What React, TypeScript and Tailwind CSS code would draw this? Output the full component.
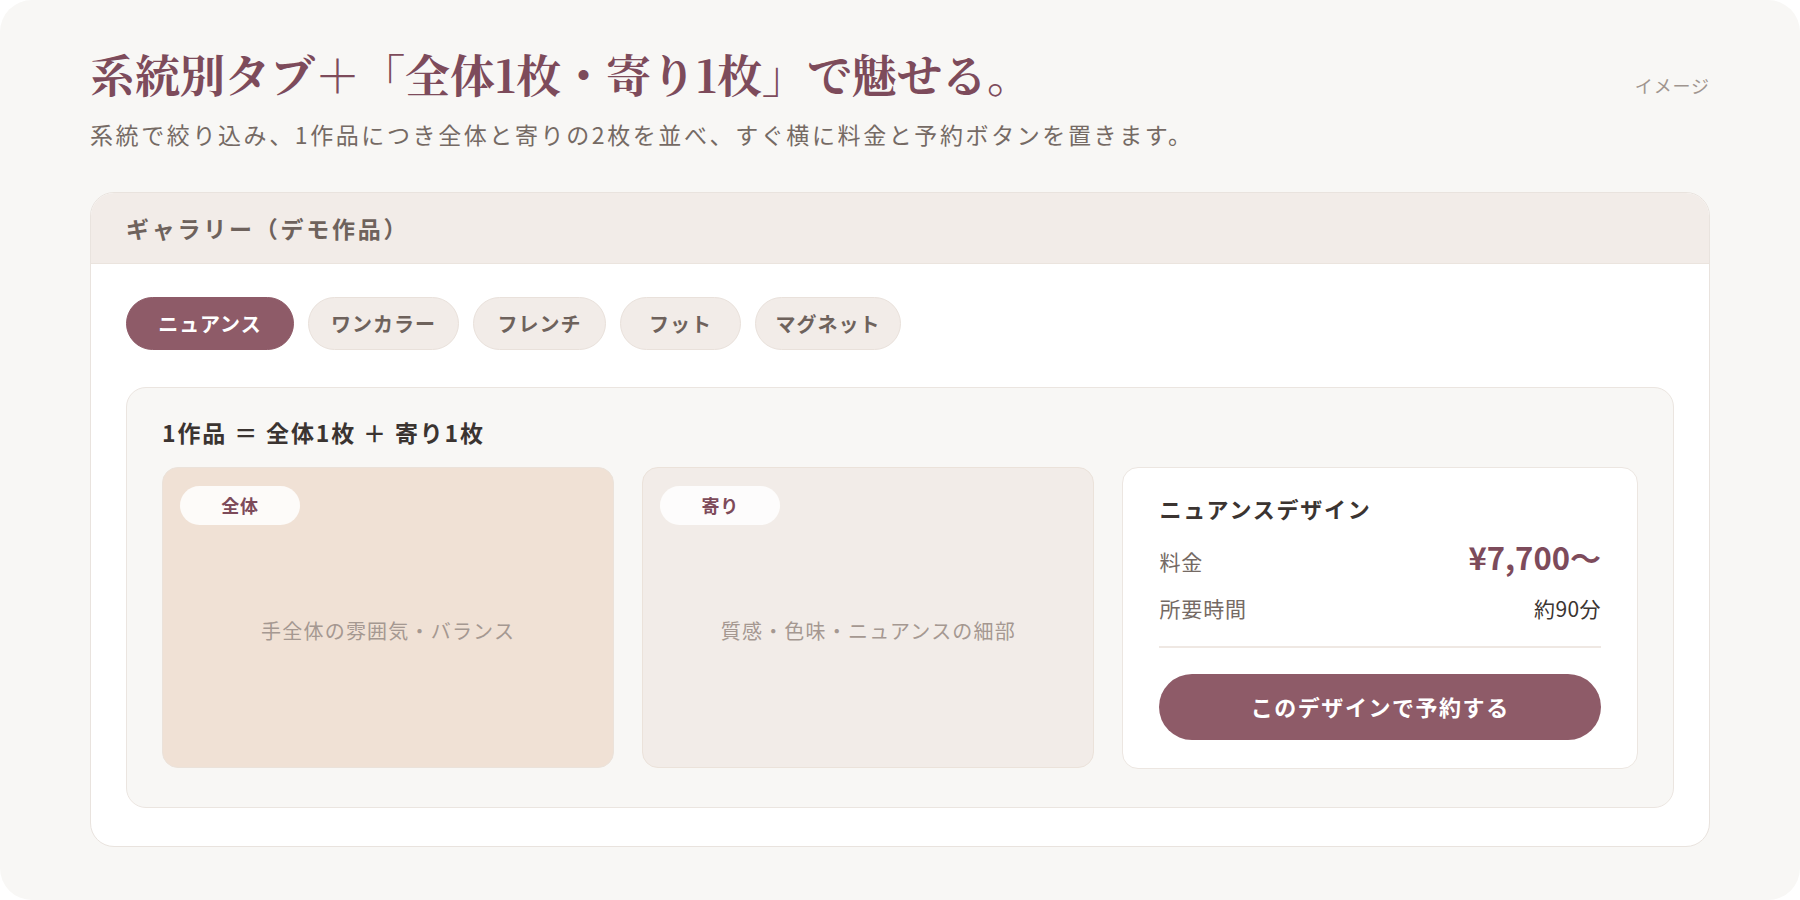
const tabs = [
  { label: "ニュアンス", w: "w-[168px]", active: true },
  { label: "ワンカラー", w: "w-[151px]", active: false },
  { label: "フレンチ", w: "w-[133px]", active: false },
  { label: "フット", w: "w-[121px]", active: false },
  { label: "マグネット", w: "w-[146px]", active: false },
];

function PhotoCard({
  badge,
  caption,
  bg,
}: {
  badge: string;
  caption: string;
  bg: string;
}) {
  return (
    <div
      className={`relative h-[301px] rounded-2xl border border-[#ebe2da] ${bg} flex items-center justify-center pt-[27px]`}
    >
      <span className="absolute left-[17px] top-[18px] w-[120px] h-[39px] rounded-full bg-white/85 flex items-center justify-center text-[18px] font-bold tracking-[0.04em] text-[#7d4b5a]">
        {badge}
      </span>
      <p className="text-[20px] tracking-[0.06em] text-[#a59891]">{caption}</p>
    </div>
  );
}

export default function App() {
  return (
    <div className="h-screen w-full bg-white font-['Noto_Sans_CJK_JP','Noto_Sans',sans-serif]">
      <div className="h-full rounded-[32px] bg-[#f8f7f5] px-[90px] pt-[45px]">
        {/* heading */}
        <div className="flex items-baseline justify-between">
          <h1 className="text-[45px] leading-[58px] font-bold text-[#7d4b5b] font-['Noto_Serif_CJK_JP','Liberation_Serif','Noto_Sans_CJK_JP',serif]">
            系統別タブ＋「全体1枚・寄り1枚」で魅せる。
          </h1>
          <span className="text-[18px] tracking-[0.05em] text-[#a0958f]">イメージ</span>
        </div>
        <p className="mt-[14px] text-[23px] leading-[34px] tracking-[2.6px] text-[#756a64]">
          系統で絞り込み、1作品につき全体と寄りの2枚を並べ、すぐ横に料金と予約ボタンを置きます。
        </p>

        {/* gallery card */}
        <div className="mt-[41px] rounded-[24px] border border-[#e9e3de] bg-white overflow-hidden">
          <div className="h-[71px] bg-[#f2ece8] border-b border-[#ebe4de] flex items-center px-[35px]">
            <h2 className="text-[23px] font-bold tracking-[0.12em] text-[#6e625c]">
              ギャラリー（デモ作品）
            </h2>
          </div>

          <div className="px-[35px] pt-[33px] pb-[38px]">
            <div className="flex gap-[14px]">
              {tabs.map((t) => (
                <button
                  key={t.label}
                  className={`${t.w} h-[53px] rounded-full border text-[20px] font-bold tracking-[0.05em] flex items-center justify-center ${
                    t.active
                      ? "bg-[#8e5b68] border-[#8e5b68] text-white"
                      : "bg-[#f2ece8] border-[#e9e1db] text-[#6e625c]"
                  }`}
                >
                  {t.label}
                </button>
              ))}
            </div>

            <div className="mt-[37px] rounded-[20px] border border-[#ebe5e0] bg-[#f8f7f5] px-[35px] pt-7 pb-[38px]">
              <h3 className="text-[23px] leading-[32px] font-bold tracking-[0.08em] text-[#3b3431]">
                1作品 ＝ 全体1枚 ＋ 寄り1枚
              </h3>

              <div className="mt-[19px] grid grid-cols-[1fr_1fr_1.14fr] gap-7">
                <PhotoCard badge="全体" caption="手全体の雰囲気・バランス" bg="bg-[#f0e1d5]" />
                <PhotoCard badge="寄り" caption="質感・色味・ニュアンスの細部" bg="bg-[#f2ece8]" />

                <div className="rounded-2xl border border-[#ece6e1] bg-white px-9 pt-[24px] pb-[28px] flex flex-col">
                  <h4 className="text-[22px] leading-[32px] font-bold tracking-[0.08em] text-[#3b3431]">
                    ニュアンスデザイン
                  </h4>
                  <div className="mt-[13px] flex items-baseline justify-between">
                    <span className="text-[21px] tracking-[0.04em] text-[#756a64]">料金</span>
                    <span className="text-[31px] leading-[40px] font-semibold text-[#7d4b5b]">
                      ¥7,700〜
                    </span>
                  </div>
                  <div className="mt-[15px] flex items-baseline justify-between leading-[30px]">
                    <span className="text-[21px] tracking-[0.04em] text-[#756a64]">所要時間</span>
                    <span className="text-[21px] tracking-[0.02em] text-[#3b3431]">約90分</span>
                  </div>
                  <div className="mt-[23px] h-[2px] bg-[#efe8e3]" />
                  <button className="mt-[26px] h-[66px] rounded-full bg-[#8e5b68] text-white text-[22px] font-bold tracking-[0.07em]">
                    このデザインで予約する
                  </button>
                </div>
              </div>
            </div>
          </div>
        </div>
      </div>
    </div>
  );
}
